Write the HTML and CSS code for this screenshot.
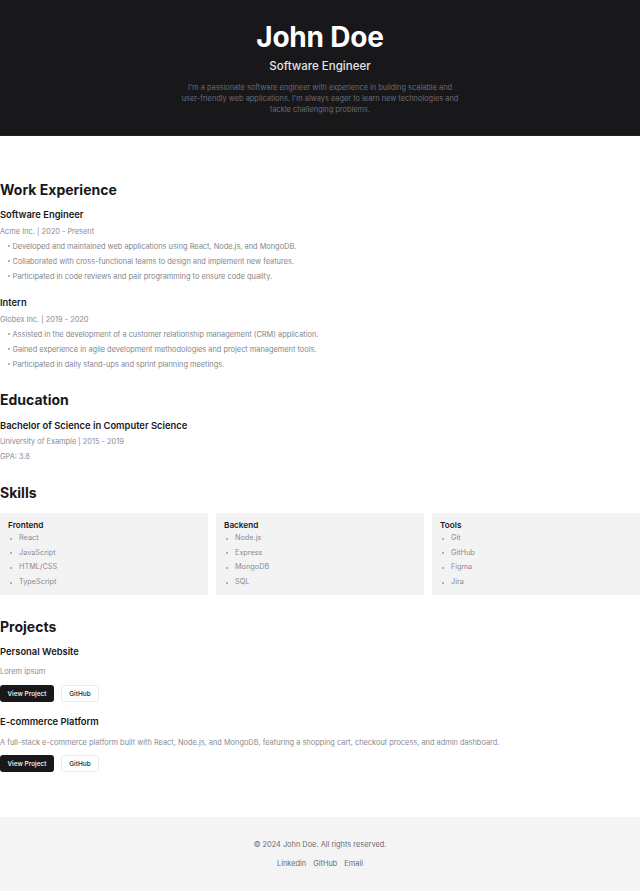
FILE: index.html
```html
<!DOCTYPE html>
<html lang="en">
<head>
<meta charset="utf-8">
<title>John Doe - Software Engineer</title>
<link rel="stylesheet" href="styles.css">
</head>
<body>
<header class="hero">
  <h1 class="hero-name">John Doe</h1>
  <h2 class="hero-role">Software Engineer</h2>
  <p class="hero-bio">I'm a passionate software engineer with experience in building scalable and user-friendly web applications. I'm always eager to learn new technologies and tackle challenging problems.</p>
</header>

<main class="main">
  <section class="section section-work">
    <h2 class="section-title">Work Experience</h2>
    <div class="job">
      <h3 class="item-title">Software Engineer</h3>
      <p class="meta">Acme Inc. | 2020 - Present</p>
      <ul class="bullets">
        <li>Developed and maintained web applications using React, Node.js, and MongoDB.</li>
        <li>Collaborated with cross-functional teams to design and implement new features.</li>
        <li>Participated in code reviews and pair programming to ensure code quality.</li>
      </ul>
    </div>
    <div class="job job-next">
      <h3 class="item-title">Intern</h3>
      <p class="meta">Globex Inc. | 2019 - 2020</p>
      <ul class="bullets">
        <li>Assisted in the development of a customer relationship management (CRM) application.</li>
        <li>Gained experience in agile development methodologies and project management tools.</li>
        <li>Participated in daily stand-ups and sprint planning meetings.</li>
      </ul>
    </div>
  </section>

  <section class="section section-edu">
    <h2 class="section-title">Education</h2>
    <h3 class="item-title edu-title">Bachelor of Science in Computer Science</h3>
    <p class="meta edu-meta">University of Example | 2015 - 2019</p>
    <p class="meta gpa">GPA: 3.8</p>
  </section>

  <section class="section section-skills">
    <h2 class="section-title">Skills</h2>
    <div class="skills-grid">
      <div class="skill-card">
        <h3 class="skill-title">Frontend</h3>
        <ul class="skill-list">
          <li>React</li>
          <li>JavaScript</li>
          <li>HTML/CSS</li>
          <li>TypeScript</li>
        </ul>
      </div>
      <div class="skill-card">
        <h3 class="skill-title">Backend</h3>
        <ul class="skill-list">
          <li>Node.js</li>
          <li>Express</li>
          <li>MongoDB</li>
          <li>SQL</li>
        </ul>
      </div>
      <div class="skill-card">
        <h3 class="skill-title">Tools</h3>
        <ul class="skill-list">
          <li>Git</li>
          <li>GitHub</li>
          <li>Figma</li>
          <li>Jira</li>
        </ul>
      </div>
    </div>
  </section>

  <section class="section section-projects">
    <h2 class="section-title">Projects</h2>
    <div class="project">
      <h3 class="item-title">Personal Website</h3>
      <p class="meta project-desc">Lorem ipsum</p>
      <div class="actions">
        <a class="btn btn-dark" href="#">View Project</a>
        <a class="btn btn-light" href="#">GitHub</a>
      </div>
    </div>
    <div class="project project-next">
      <h3 class="item-title">E-commerce Platform</h3>
      <p class="meta project-desc">A full-stack e-commerce platform built with React, Node.js, and MongoDB, featuring a shopping cart, checkout process, and admin dashboard.</p>
      <div class="actions">
        <a class="btn btn-dark" href="#">View Project</a>
        <a class="btn btn-light" href="#">GitHub</a>
      </div>
    </div>
  </section>
</main>

<footer class="footer">
  <p class="copyright">© 2024 John Doe. All rights reserved.</p>
  <nav class="footer-links">
    <a href="#">Linkedin</a>
    <a href="#">GitHub</a>
    <a href="#">Email</a>
  </nav>
</footer>
</body>
</html>
```

FILE: styles.css
```css
* { box-sizing: border-box; }

html, body {
  margin: 0;
  padding: 0;
}

body {
  font-family: Inter, "Noto Sans", "Liberation Sans", sans-serif;
  color: #18181b;
  background: #ffffff;
}

h1, h2, h3, p, ul { margin: 0; padding: 0; }

a { text-decoration: none; color: inherit; }

/* Header */
.hero {
  background: #18181b;
  padding: 19px 16px 20.5px;
  text-align: center;
  display: flex;
  flex-direction: column;
  align-items: center;
  border-bottom: 1px solid #232326;
}

.hero-name {
  font-size: 28px;
  line-height: 36px;
  font-weight: 700;
  color: #ffffff;
  letter-spacing: -0.2px;
}

.hero-role {
  margin-top: 3px;
  font-size: 11.5px;
  line-height: 16px;
  font-weight: 500;
  color: #e4e4e7;
}

.hero-bio {
  margin-top: 7.5px;
  max-width: 278px;
  font-size: 7.4px;
  line-height: 11px;
  color: #6b6b72;
}

/* Main */
.main {
  padding-top: 44px;
}

.section-title {
  font-size: 14px;
  line-height: 20px;
  font-weight: 700;
  color: #18181b;
}

.item-title {
  margin-top: 8px;
  font-size: 9.4px;
  line-height: 14px;
  font-weight: 600;
  color: #18181b;
}

.meta {
  margin-top: 3.5px;
  font-size: 7.4px;
  line-height: 11px;
  color: #8a8a90;
}

.bullets {
  list-style: none;
  margin-top: 2px;
}

.bullets li {
  display: flex;
  font-size: 7.4px;
  line-height: 15px;
  color: #85858b;
  padding-left: 8px;
}

.bullets li::before {
  content: "";
  flex: none;
  width: 2px;
  height: 2px;
  border-radius: 50%;
  background: #9a9aa0;
  margin-top: 6.5px;
  margin-right: 2.5px;
}

.job-next .item-title { margin-top: 12.5px; }

.section-edu { margin-top: 18.5px; }
.edu-title { margin-top: 9px; }
.edu-meta { margin-top: 2.5px; }
.gpa { margin-top: 4px; }

/* Skills */
.section-skills { margin-top: 21.5px; }

.skills-grid {
  margin-top: 10px;
  display: grid;
  grid-template-columns: repeat(3, 1fr);
  gap: 8px;
}

.skill-card {
  background: #f3f3f4;
  padding: 6px 8px 5.5px;
}

.skill-title {
  font-size: 8.2px;
  line-height: 12px;
  font-weight: 600;
  color: #18181b;
}

.skill-list {
  list-style: none;
}

.skill-list li {
  display: flex;
  font-size: 7.3px;
  line-height: 14.7px;
  color: #8a8a90;
  padding-left: 2px;
}

.skill-list li::before {
  content: "";
  flex: none;
  width: 2px;
  height: 2px;
  border-radius: 50%;
  background: #9a9aa0;
  margin-top: 6.5px;
  margin-right: 7px;
}

/* Projects */
.section-projects { margin-top: 22px; }

.project-desc { margin-top: 6.5px; }
.project-next .item-title { margin-top: 13px; }
.project-next .project-desc { margin-top: 7.5px; }

.actions {
  margin-top: 8.5px;
  display: flex;
  gap: 7px;
}
.project-next .actions { margin-top: 7.5px; }

.btn {
  height: 17px;
  display: inline-flex;
  align-items: center;
  justify-content: center;
  font-size: 6.5px;
  font-weight: 500;
  border-radius: 3px;
}

.btn-dark {
  width: 54px;
  background: #18181b;
  color: #ffffff;
}

.btn-light {
  width: 38px;
  background: #ffffff;
  color: #18181b;
  border: 1px solid #ececee;
}

/* Footer */
.footer {
  margin-top: 45px;
  background: #f4f4f5;
  padding: 21.5px 16px 22.5px;
  display: flex;
  flex-direction: column;
  align-items: center;
}

.copyright {
  font-size: 7.4px;
  line-height: 11px;
  color: #6b6b72;
}

.footer-links {
  margin-top: 8px;
  display: flex;
  gap: 7px;
  font-size: 7.4px;
  line-height: 11px;
  color: #6b6b72;
}
```
